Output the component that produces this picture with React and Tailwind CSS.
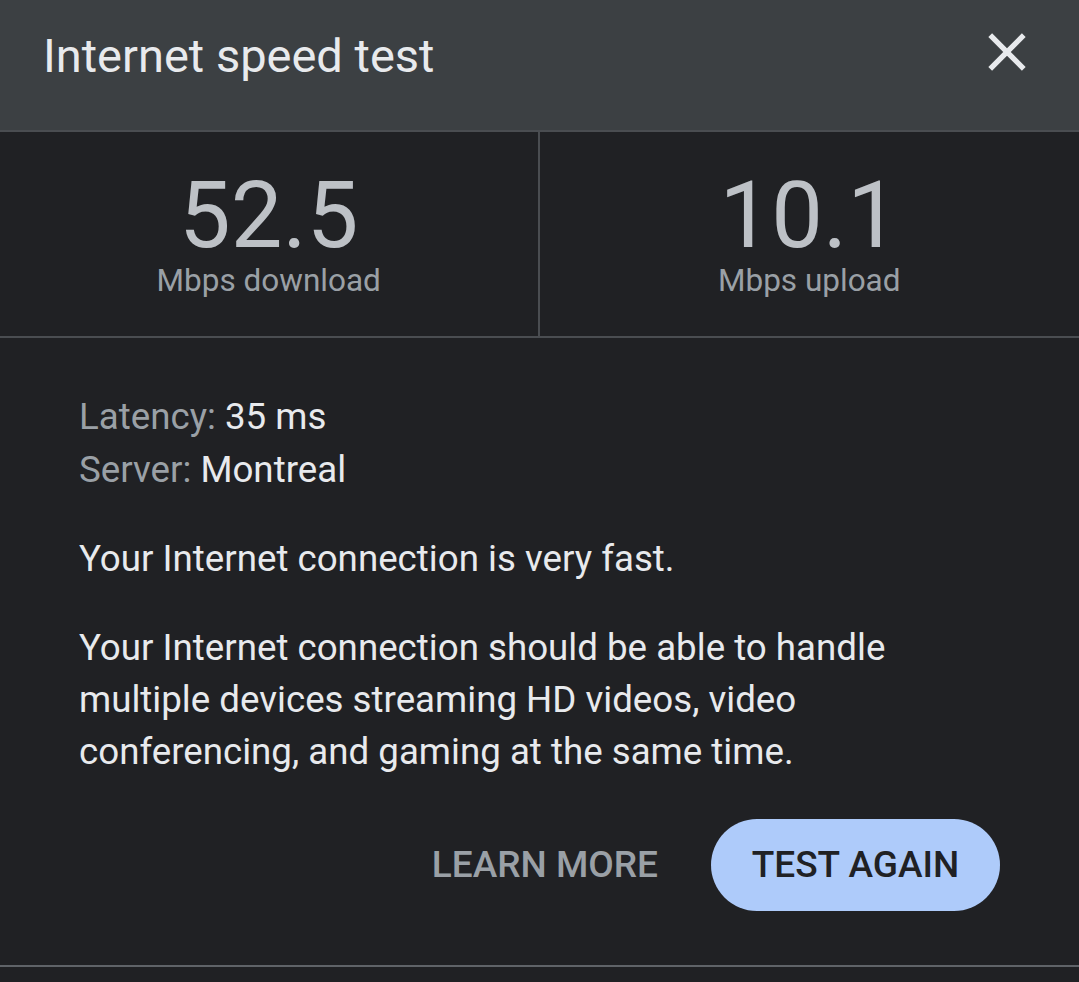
export default function App() {
  return (
    <div
      className="w-[1079px] h-[982px] bg-[#202124] overflow-hidden"
      style={{ fontFamily: 'Roboto, "Noto Sans", Arial, sans-serif' }}
    >
      {/* header */}
      <div className="h-[130px] bg-[#3c4043] flex justify-between items-start pl-[43px] pr-[40px] pt-[28px]">
        <h1 className="text-[47px] leading-[56px] text-[#e8eaed] font-normal">Internet speed test</h1>
        <svg className="w-[64px] h-[64px] -mt-[8px] text-[#e8eaed]" viewBox="0 0 24 24" fill="currentColor">
          <path d="M19 6.41L17.59 5 12 10.59 6.41 5 5 6.41 10.59 12 5 17.59 6.41 19 12 13.41 17.59 19 19 17.59 13.41 12z" />
        </svg>
      </div>

      {/* results */}
      <div className="grid grid-cols-2 h-[208px] border-y-2 border-[#4a4d51]">
        <div className="flex flex-col items-center pt-[42px] border-r-2 border-[#4a4d51]">
          <div className="text-[92px] leading-[84px] text-[#bdc1c6]">52.5</div>
          <div className="mt-[5px] text-[31.5px] leading-[36px] text-[#9aa0a6]">Mbps download</div>
        </div>
        <div className="flex flex-col items-center pt-[42px]">
          <div className="text-[92px] leading-[84px] text-[#bdc1c6]">10.1</div>
          <div className="mt-[5px] text-[31.5px] leading-[36px] text-[#9aa0a6]">Mbps upload</div>
        </div>
      </div>

      {/* details */}
      <div className="pl-[79px] pr-[79px] pt-[52px] text-[36.7px] text-[#e8eaed]">
        <div className="leading-[53px]">
          <div>
            <span className="text-[#9aa0a6]">Latency:</span> 35 ms
          </div>
          <div>
            <span className="text-[#9aa0a6]">Server:</span> Montreal
          </div>
        </div>
        <p className="mt-[37px] leading-[52px]">Your Internet connection is very fast.</p>
        <p className="mt-[37px] leading-[52px]">
          Your Internet connection should be able to handle multiple devices streaming HD videos, video
          conferencing, and gaming at the same time.
        </p>

        <div className="flex justify-end items-center gap-[53px] mt-[41px]">
          <button className="text-[37px] font-medium text-[#9aa0a6]">LEARN MORE</button>
          <button className="w-[289px] h-[92px] rounded-full bg-[#aecbfa] text-[37px] font-medium text-[#202124]">
            TEST AGAIN
          </button>
        </div>
      </div>

      <div className="mt-[54px] h-[2px] bg-[#5f6368]" />
    </div>
  );
}
